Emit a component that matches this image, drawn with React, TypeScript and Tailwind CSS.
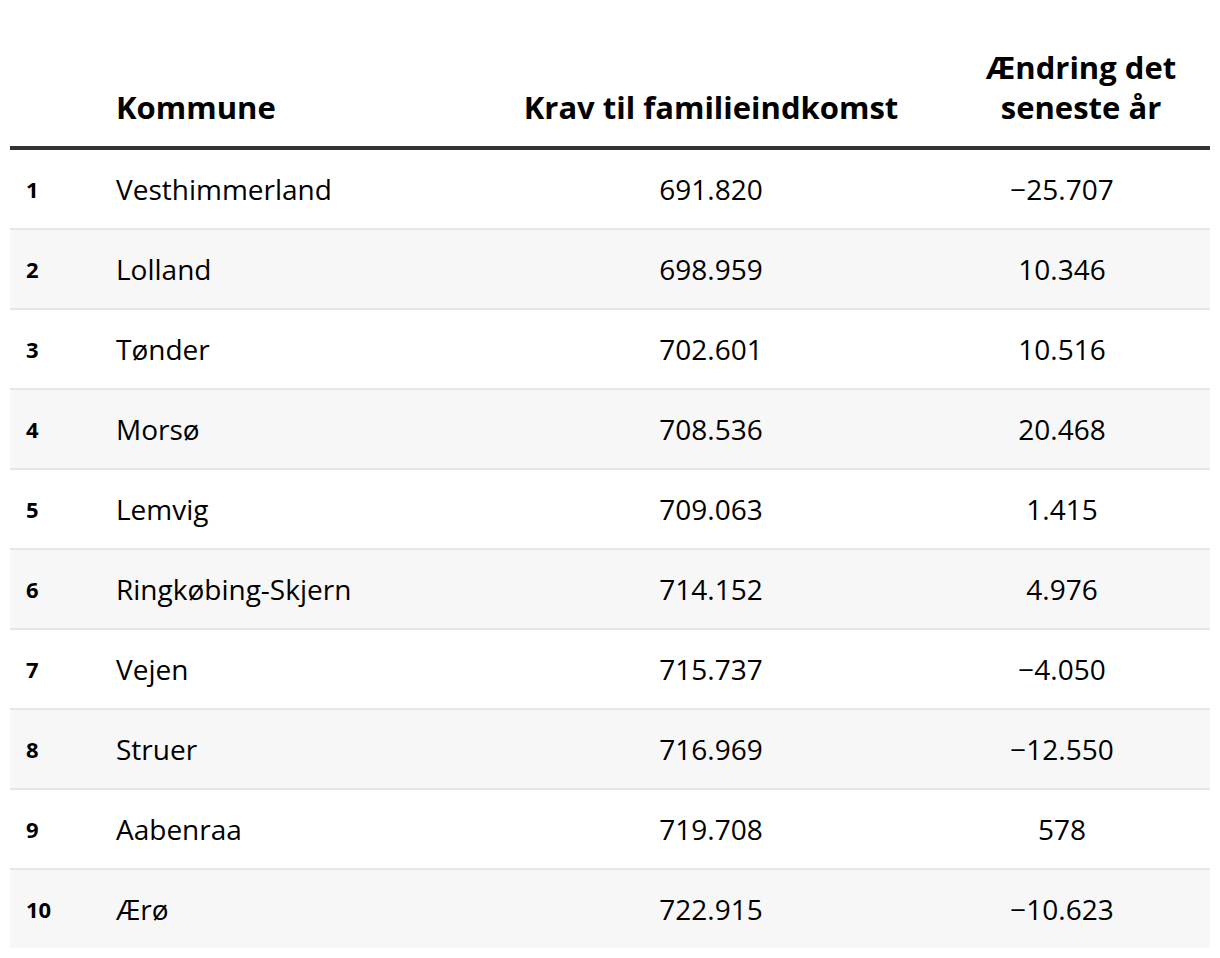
const rows: [number, string, string, string][] = [
  [1, "Vesthimmerland", "691.820", "−25.707"],
  [2, "Lolland", "698.959", "10.346"],
  [3, "Tønder", "702.601", "10.516"],
  [4, "Morsø", "708.536", "20.468"],
  [5, "Lemvig", "709.063", "1.415"],
  [6, "Ringkøbing-Skjern", "714.152", "4.976"],
  [7, "Vejen", "715.737", "−4.050"],
  [8, "Struer", "716.969", "−12.550"],
  [9, "Aabenraa", "719.708", "578"],
  [10, "Ærø", "722.915", "−10.623"],
]

export default function App() {
  return (
    <div className="bg-white min-h-[958px] px-[10px] font-['Open_Sans',sans-serif] text-black">
      <table className="w-[1200px] table-fixed border-separate border-spacing-0">
        <colgroup>
          <col className="w-[90px]" />
          <col className="w-[408px]" />
          <col className="w-[406px]" />
          <col className="w-[296px]" />
        </colgroup>
        <thead>
          <tr>
            <th className="h-[150px] border-b-4 border-[#333333]" />
            <th className="h-[150px] border-b-4 border-[#333333] align-bottom text-left pl-[16px] pb-[19px] text-[31px] leading-[40px] font-bold">Kommune</th>
            <th className="h-[150px] border-b-4 border-[#333333] align-bottom text-center pb-[19px] text-[31px] leading-[40px] font-bold">Krav til familieindkomst</th>
            <th className="h-[150px] border-b-4 border-[#333333] align-bottom text-center pl-[38px] pb-[19px] text-[31px] leading-[40px] font-bold">
              Ændring det
              <br />
              seneste år
            </th>
          </tr>
        </thead>
        <tbody>
          {rows.map(([n, name, krav, diff], i) => {
            const last = i === rows.length - 1
            const cell = `${last ? "h-[78px]" : "h-[80px] border-b-2 border-[#e6e6e6]"} align-middle ${i % 2 === 1 ? "bg-[#f7f7f7]" : ""}`
            return (
              <tr key={n}>
                <td className={`${cell} pl-[16px] text-[22px] font-bold`}>{n}</td>
                <td className={`${cell} pl-[16px] text-[28px]`}>{name}</td>
                <td className={`${cell} text-center text-[28px]`}>{krav}</td>
                <td className={`${cell} text-center text-[28px]`}>{diff}</td>
              </tr>
            )
          })}
        </tbody>
      </table>
    </div>
  )
}
